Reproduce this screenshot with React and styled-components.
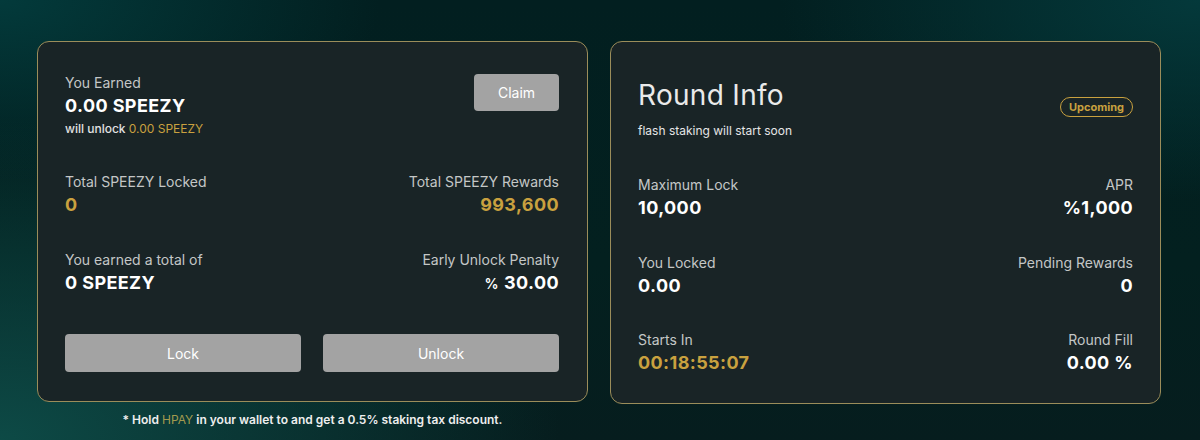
import React from "react";
import styled, { createGlobalStyle } from "styled-components";

const colors = {
	card: "#192426",
	border: "#9b8d5a",
	label: "#c4c7c6",
	white: "#ffffff",
	gold: "#c9a13f",
	button: "#a3a3a3",
};

const GlobalStyle = createGlobalStyle`
	html, body {
		margin: 0;
		padding: 0;
	}
	body {
		font-family: Inter, "Open Sans", sans-serif;
		background: #041c1e;
	}
`;

const Page = styled.div`
	width: 1200px;
	height: 440px;
	box-sizing: border-box;
	padding: 41px 39px 0 37px;
	display: flex;
	gap: 22px;
	align-items: flex-start;
	background:
		radial-gradient(ellipse 560px 320px at 0% 100%, #0d4a46 0%, rgba(13, 74, 70, 0) 100%),
		radial-gradient(ellipse 420px 200px at 100% 0%, #04393b 0%, rgba(4, 57, 59, 0) 100%),
		radial-gradient(ellipse 380px 180px at 0% 0%, #033a3b 0%, rgba(3, 58, 59, 0) 100%),
		linear-gradient(180deg, #021f20 0%, #03201f 60%, #061d1e 100%);
`;

const Column = styled.div`
	display: flex;
	flex-direction: column;
	align-items: center;
`;

const Card = styled.div`
	box-sizing: border-box;
	width: 551px;
	height: ${(p) => p.h}px;
	background: ${colors.card};
	border: 1px solid ${colors.border};
	border-radius: 12px;
	padding: ${(p) => p.pad};
	display: flex;
	flex-direction: column;
`;

const Row = styled.div`
	display: flex;
	justify-content: space-between;
	align-items: flex-start;
	margin-top: ${(p) => p.mt || 0}px;
`;

const Stat = styled.div`
	display: flex;
	flex-direction: column;
	align-items: ${(p) => (p.right ? "flex-end" : "flex-start")};
`;

const Label = styled.div`
	font-size: 14px;
	line-height: 18px;
	color: ${colors.label};
`;

const Value = styled.div`
	font-size: 18px;
	line-height: 22px;
	font-weight: 700;
	margin-top: 3px;
	letter-spacing: 0.4px;
	color: ${(p) => (p.gold ? colors.gold : colors.white)};
`;

const Small = styled.span`
	font-size: 14px;
	font-weight: 600;
	margin-right: 5px;
`;

const Note = styled.div`
	font-size: 12px;
	line-height: 14px;
	font-weight: 500;
	color: #e2e2e2;
	margin-top: 5px;
`;

const Gold = styled.span`
	color: ${colors.gold};
	font-weight: 400;
`;

const ClaimButton = styled.button`
	width: 85px;
	height: 37px;
	border: none;
	border-radius: 4px;
	background: ${colors.button};
	color: ${colors.white};
	font-family: inherit;
	font-size: 14px;
`;

const ButtonRow = styled.div`
	display: grid;
	grid-template-columns: 1fr 1fr;
	gap: 22px;
	margin-top: 39px;
`;

const WideButton = styled.button`
	height: 38px;
	border: none;
	border-radius: 4px;
	background: ${colors.button};
	color: ${colors.white};
	font-family: inherit;
	font-size: 14px;
`;

const Footer = styled.div`
	margin-top: 10px;
	font-size: 12px;
	font-weight: 600;
	color: #eeeeee;

	span {
		color: #a39a4e;
		font-weight: 400;
	}
`;

const Title = styled.div`
	font-size: 28px;
	line-height: 34px;
	color: #eaeaea;
	font-weight: 400;
	letter-spacing: 0.3px;
`;

const Badge = styled.div`
	margin-top: 19px;
	padding: 2px 8px;
	border: 1px solid ${colors.gold};
	border-radius: 11px;
	color: ${colors.gold};
	font-size: 11px;
	font-weight: 700;
	line-height: 14px;
`;

const Sub = styled.div`
	font-size: 12px;
	color: #e6e6e6;
	margin-top: 11px;
`;

const App = () => {
	return (
		<>
			<GlobalStyle />
			<Page>
				<Column>
					<Card h={361} pad="32px 28px 0 27px">
						<Row>
							<Stat>
								<Label>You Earned</Label>
								<Value>0.00 SPEEZY</Value>
								<Note>
									will unlock <Gold>0.00 SPEEZY</Gold>
								</Note>
							</Stat>
							<ClaimButton>Claim</ClaimButton>
						</Row>
						<Row mt={37}>
							<Stat>
								<Label>Total SPEEZY Locked</Label>
								<Value gold>0</Value>
							</Stat>
							<Stat right>
								<Label>Total SPEEZY Rewards</Label>
								<Value gold>993,600</Value>
							</Stat>
						</Row>
						<Row mt={35}>
							<Stat>
								<Label>You earned a total of</Label>
								<Value>0 SPEEZY</Value>
							</Stat>
							<Stat right>
								<Label>Early Unlock Penalty</Label>
								<Value>
									<Small>%</Small>30.00
								</Value>
							</Stat>
						</Row>
						<ButtonRow>
							<WideButton>Lock</WideButton>
							<WideButton>Unlock</WideButton>
						</ButtonRow>
					</Card>
					<Footer>
						* Hold <span>HPAY</span> in your wallet to and get a 0.5% staking tax discount.
					</Footer>
				</Column>
				<Card h={363} pad="36px 27px 0 27px">
					<Row>
						<Stat>
							<Title>Round Info</Title>
							<Sub>flash staking will start soon</Sub>
						</Stat>
						<Badge>Upcoming</Badge>
					</Row>
					<Row mt={38}>
						<Stat>
							<Label>Maximum Lock</Label>
							<Value>10,000</Value>
						</Stat>
						<Stat right>
							<Label>APR</Label>
							<Value>%1,000</Value>
						</Stat>
					</Row>
					<Row mt={35}>
						<Stat>
							<Label>You Locked</Label>
							<Value>0.00</Value>
						</Stat>
						<Stat right>
							<Label>Pending Rewards</Label>
							<Value>0</Value>
						</Stat>
					</Row>
					<Row mt={34}>
						<Stat>
							<Label>Starts In</Label>
							<Value gold>00:18:55:07</Value>
						</Stat>
						<Stat right>
							<Label>Round Fill</Label>
							<Value>0.00 %</Value>
						</Stat>
					</Row>
				</Card>
			</Page>
		</>
	);
};

export default App;
